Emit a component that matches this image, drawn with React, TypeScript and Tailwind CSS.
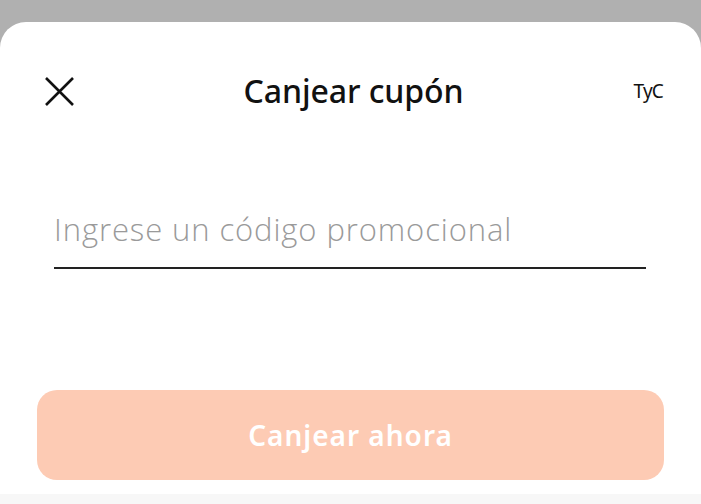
import React from "react";

export default function App() {
  return (
    <div className="w-[701px] h-[504px] bg-[#b0b0b0] flex flex-col overflow-hidden" style={{ fontFamily: '"Open Sans", "Noto Sans", sans-serif' }}>
      <div className="h-[22px] shrink-0" />
      <div className="flex-1 bg-white rounded-t-[26px] flex flex-col">
        <div className="h-[49px] shrink-0" />
        <div className="grid grid-cols-[1fr_auto_1fr] items-center h-[40px] pl-[44px] pr-[38px]">
          <svg width="31" height="31" viewBox="0 0 31 31" fill="none">
            <path d="M2 2 L29 29 M29 2 L2 29" stroke="#111" strokeWidth="2.6" strokeLinecap="butt" />
          </svg>
          <div className="text-[32px] leading-[40px] font-medium text-[#111] tracking-[-0.1px]" style={{ fontFamily: '"Noto Sans", sans-serif' }}>
            Canjear cupón
          </div>
          <div className="justify-self-end text-[19px] leading-[40px] text-[#111] tracking-[-0.8px]" style={{ fontFamily: '"Noto Sans", sans-serif' }}>TyC</div>
        </div>
        <div className="h-[98px] shrink-0" />
        <div className="mx-[54px] w-[592px] border-b-2 border-[#222] pb-[18px]">
          <div className="text-[31px] font-light text-[#9a9a9a] leading-[40px] tracking-[0.9px]">Ingrese un código promocional</div>
        </div>
        <div className="h-[121px] shrink-0" />
        <div className="mx-[37px] h-[90px] rounded-[20px] bg-[#fdcbb4] flex items-center justify-center">
          <span className="text-[28px] font-semibold text-white tracking-[1px]" style={{ fontFamily: '"Noto Sans", sans-serif' }}>Canjear ahora</span>
        </div>
        <div className="flex-1" />
        <div className="h-[10px] bg-[#f7f7f7]" />
      </div>
    </div>
  );
}
